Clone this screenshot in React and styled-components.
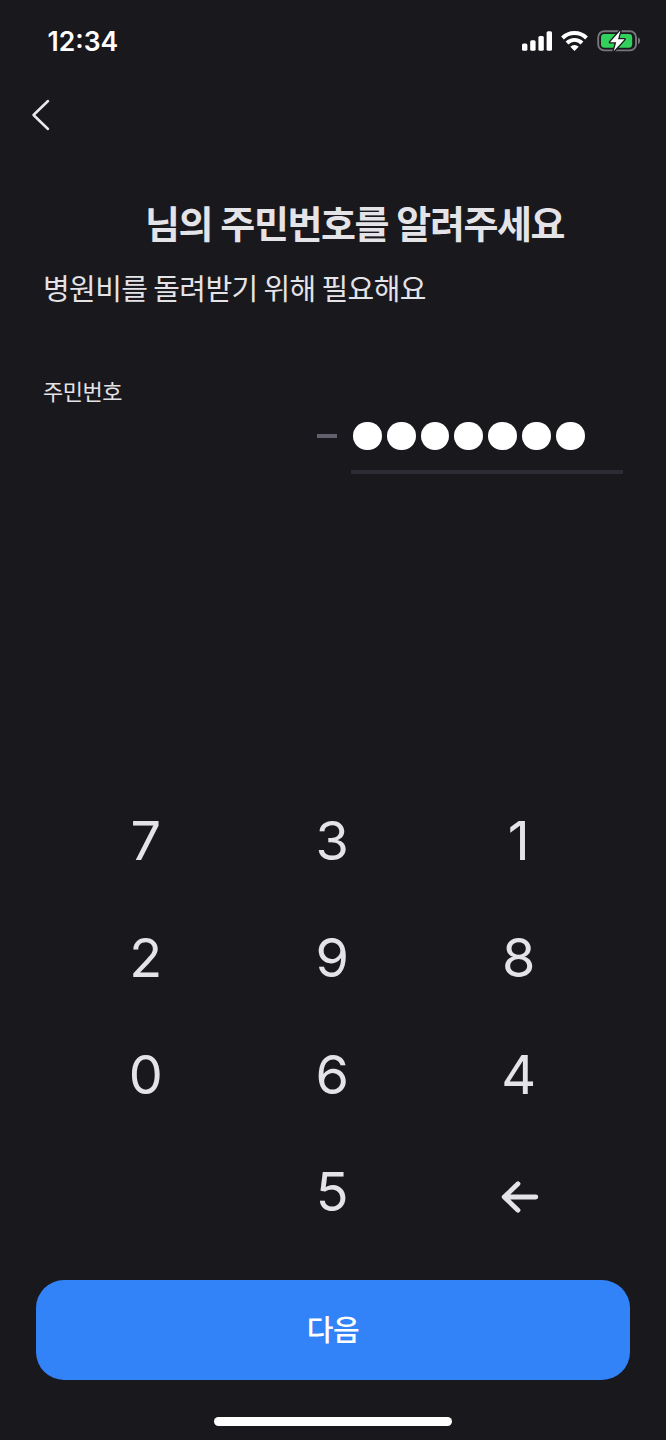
import React from 'react'
import styled, { createGlobalStyle } from 'styled-components'

const GlobalStyle = createGlobalStyle`
  body {
    margin: 0;
    background: #19181d;
  }
  * {
    box-sizing: border-box;
  }
  button {
    border: 0;
    padding: 0;
    background: none;
    color: inherit;
  }
`

const Screen = styled.div`
  display: flex;
  flex-direction: column;
  width: 666px;
  height: 1440px;
  overflow: hidden;
  background: #19181d;
  color: #e4e3e8;
  font-family: 'Noto Sans CJK KR', sans-serif;
`

const StatusBar = styled.header`
  display: flex;
  align-items: center;
  justify-content: space-between;
  height: 82px;
  padding: 0 25px 0 47.5px;
  color: #fff;
`

const Time = styled.span`
  font-family: 'Inter', sans-serif;
  font-size: 26.5px;
  font-weight: 600;
`

const StatusIcons = styled.div`
  display: flex;
  align-items: center;
  gap: 9px;

  svg {
    display: block;
  }
`

const NavBar = styled.nav`
  display: flex;
  align-items: center;
  height: 66px;
  padding-left: 30px;
`

const BackButton = styled.button`
  display: flex;
`

const Heading = styled.section`
  padding: 47px 43px 0;
`

const Title = styled.h1`
  margin: 0;
  padding-left: 102px;
  font-size: 38px;
  font-weight: 700;
  line-height: 54px;
  letter-spacing: -1.4px;
  word-spacing: 1px;
  white-space: nowrap;
`

const Subtitle = styled.p`
  margin: 18px 0 0;
  font-size: 29px;
  line-height: 40px;
  letter-spacing: -0.6px;
  white-space: nowrap;
`

const Field = styled.section`
  display: flex;
  flex-direction: column;
  height: 166px;
  padding: 68px 43px 0;
`

const Label = styled.label`
  font-size: 22px;
  line-height: 30px;
  letter-spacing: -0.5px;
`

const FieldRow = styled.div`
  display: flex;
  justify-content: flex-end;
  gap: 14px;
  margin-top: 16.5px;
`

const Dash = styled.span`
  width: 20px;
  height: 4px;
  margin-top: 12.5px;
  background: #62606c;
`

const SecretInput = styled.div`
  display: flex;
  gap: 5px;
  width: 272px;
  height: 52px;
  padding-left: 2px;
  border-bottom: 4px solid #2c2c35;
  border-radius: 1px;
`

const Dot = styled.span`
  width: 28.8px;
  height: 28.8px;
  border-radius: 50%;
  background: #fff;
`

const Keypad = styled.div`
  display: grid;
  grid-template-columns: repeat(3, 186.5px);
  grid-auto-rows: 117px;
  margin-top: auto;
  padding-left: 52.5px;
`

const Key = styled.button`
  display: flex;
  align-items: center;
  justify-content: center;
  font-family: 'Inter', sans-serif;
  font-size: 54px;
  font-weight: 400;
  line-height: 1;
`

const DeleteKey = styled(Key)`
  padding: 10px 0 0 2px;
`

const Footer = styled.footer`
  display: flex;
  flex-direction: column;
  align-items: center;
  height: 190px;
  padding: 30px 36px 0;
`

const NextButton = styled.button`
  width: 100%;
  height: 99.5px;
  padding-bottom: 4px;
  border-radius: 28px;
  background: #3282f8;
  color: #fff;
  font-family: inherit;
  font-size: 29px;
  font-weight: 500;
  letter-spacing: -0.5px;
`

const HomeIndicator = styled.div`
  width: 238px;
  height: 9px;
  margin-top: 37px;
  border-radius: 5px;
  background: #fff;
`

const SignalIcon = () => (
  <svg width="30" height="20" viewBox="0 0 30 20" fill="#fff">
    <rect x="0" y="12.5" width="5.4" height="7.2" rx="1.5" />
    <rect x="8.2" y="9.3" width="5.4" height="10.4" rx="1.5" />
    <rect x="16.4" y="4.9" width="5.4" height="14.8" rx="1.5" />
    <rect x="24.6" y="0.3" width="5.4" height="19.4" rx="1.5" />
  </svg>
)

const WifiIcon = () => (
  <svg width="27" height="20" viewBox="0 0 27 20" fill="none" stroke="#fff" strokeWidth="3.9">
    <path d="M1.5 7a17 17 0 0 1 24 0" />
    <path d="M6 12a10.6 10.6 0 0 1 15 0" />
    <path d="M13.5 20l-4.2-4.3a6 6 0 0 1 8.4 0z" fill="#fff" stroke="none" />
  </svg>
)

const BatteryIcon = () => (
  <svg width="44" height="24" viewBox="0 0 44 24">
    <rect x="1.2" y="2.2" width="37.8" height="19.2" rx="6" fill="none" stroke="#77767b" strokeWidth="1.9" />
    <path d="M41 8.6c2.8 1 2.8 5.6 0 6.6z" fill="#77767b" />
    <rect x="4" y="4.9" width="31.2" height="13.8" rx="3.4" fill="#32d15b" />
    <path
      d="M23.4 1.6L13 13.2h6.2L16.8 22L27.6 10.2h-6.6z"
      fill="#fff"
      stroke="#19181d"
      strokeWidth="2.6"
      strokeLinejoin="round"
      paintOrder="stroke"
    />
  </svg>
)

const ChevronIcon = () => (
  <svg width="22" height="34" viewBox="0 0 22 34" fill="none" stroke="#e9e8ed" strokeWidth="2.5" strokeLinecap="round" strokeLinejoin="round">
    <path d="M18 3L3.5 17L18 31" />
  </svg>
)

const DeleteIcon = () => (
  <svg width="38" height="34" viewBox="0 0 38 34" fill="none" stroke="#e4e3e8" strokeWidth="4.8" strokeLinecap="round" strokeLinejoin="round">
    <path d="M17 3.8L3.2 17L17 30.2M3.2 17H34.8" />
  </svg>
)

const digits = ['7', '3', '1', '2', '9', '8', '0', '6', '4', '', '5']

const App = () => (
  <Screen>
    <GlobalStyle />
    <StatusBar>
      <Time>12:34</Time>
      <StatusIcons>
        <SignalIcon />
        <WifiIcon />
        <BatteryIcon />
      </StatusIcons>
    </StatusBar>

    <NavBar>
      <BackButton aria-label="뒤로">
        <ChevronIcon />
      </BackButton>
    </NavBar>

    <Heading>
      <Title>님의 주민번호를 알려주세요</Title>
      <Subtitle>병원비를 돌려받기 위해 필요해요</Subtitle>
    </Heading>

    <Field>
      <Label>주민번호</Label>
      <FieldRow>
        <Dash />
        <SecretInput>
          {[...Array(7)].map((_, i) => <Dot key={i} />)}
        </SecretInput>
      </FieldRow>
    </Field>

    <Keypad>
      {digits.map((digit, i) => (digit ? <Key key={i}>{digit}</Key> : <span key={i} />))}
      <DeleteKey aria-label="지우기">
        <DeleteIcon />
      </DeleteKey>
    </Keypad>

    <Footer>
      <NextButton>다음</NextButton>
      <HomeIndicator />
    </Footer>
  </Screen>
)

export default App
